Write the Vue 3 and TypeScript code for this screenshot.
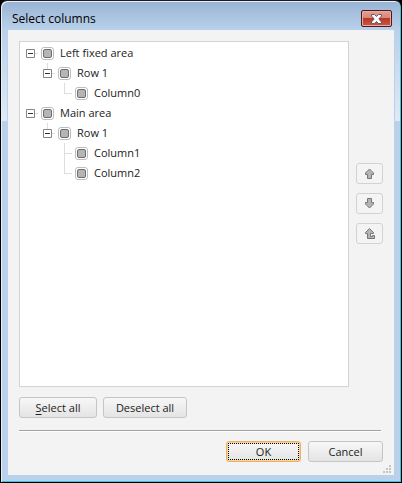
<script setup lang="ts">
import { computed, ref } from 'vue'

interface TreeNode {
  id: string
  label: string
  depth: number
  parents: string[]
  branch: boolean
  last: boolean
}

const nodes: TreeNode[] = [
  { id: 'left', label: 'Left fixed area', depth: 0, parents: [], branch: true, last: false },
  { id: 'left-row', label: 'Row 1', depth: 1, parents: ['left'], branch: true, last: true },
  { id: 'c0', label: 'Column0', depth: 2, parents: ['left', 'left-row'], branch: false, last: true },
  { id: 'main', label: 'Main area', depth: 0, parents: [], branch: true, last: true },
  { id: 'main-row', label: 'Row 1', depth: 1, parents: ['main'], branch: true, last: true },
  { id: 'c1', label: 'Column1', depth: 2, parents: ['main', 'main-row'], branch: false, last: false },
  { id: 'c2', label: 'Column2', depth: 2, parents: ['main', 'main-row'], branch: false, last: true },
]

const collapsed = ref<string[]>([])
const selected = ref<string[]>(nodes.map((n) => n.id))
const visible = computed(() => nodes.filter((n) => !n.parents.some((p) => collapsed.value.includes(p))))

function toggle(id: string) {
  collapsed.value = collapsed.value.includes(id)
    ? collapsed.value.filter((c) => c !== id)
    : [...collapsed.value, id]
}

const moves = [
  { name: 'Move up', path: 'M5.5 1 9.5 5V6.5H7.5V10.5H3.5V6.5H1.5V5Z' },
  { name: 'Move down', path: 'M5.5 10 9.5 6V4.5H7.5V.5H3.5V4.5H1.5V6Z' },
  { name: 'Move to parent', path: 'M5.5 .5 9.5 4.5V5.5H6.5V8.5H8.5V7.5H10.5V10.5H3.5V5.5H1.5V4.5Z' },
]
</script>

<template>
  <div class="window">
    <header class="titlebar">
      <h1>Select columns</h1>
      <button type="button" class="close" aria-label="Close">
        <svg width="11" height="10" viewBox="0 0 11 10">
          <path d="M.5.5H3.5L5.5 2.5 7.5.5H10.5V2L7.8 5 10.5 8V9.5H7.5L5.5 7.5 3.5 9.5H.5V8L3.2 5 .5 2Z" fill="#fff" stroke="#655a66" />
        </svg>
      </button>
    </header>
    <main class="content">
      <div class="columns">
        <ul class="tree">
          <li v-for="n in visible" :key="n.id" :class="['row', 'depth-' + n.depth]">
            <span :class="['gutter', { leaf: !n.branch, nested: n.depth > 0, more: !n.branch && !n.last }]">
              <button v-if="n.branch" type="button" class="expander" :aria-label="'Toggle ' + n.label" @click="toggle(n.id)">
                <svg width="9" height="9" viewBox="0 0 9 9">
                  <path d="M.5.5H8.5V8.5H.5Z" fill="#fff" stroke="#848484" />
                  <path d="M2 4.5H7" stroke="#333" />
                  <path v-if="collapsed.includes(n.id)" d="M4.5 2V7" stroke="#333" />
                </svg>
              </button>
            </span>
            <input :id="n.id" v-model="selected" type="checkbox" :value="n.id" />
            <label :for="n.id">{{ n.label }}</label>
          </li>
        </ul>
        <div class="moves">
          <button v-for="m in moves" :key="m.name" type="button" class="move" :aria-label="m.name">
            <svg width="11" height="11" viewBox="0 0 11 11">
              <path :d="m.path" fill="#b4b4b4" stroke="#777" />
            </svg>
          </button>
        </div>
      </div>
      <div class="selection">
        <button type="button" class="btn select" @click="selected = nodes.map((n) => n.id)"><u>S</u>elect all</button>
        <button type="button" class="btn deselect" @click="selected = []">Deselect all</button>
      </div>
      <hr />
      <footer>
        <button type="button" class="btn ok"><span>OK</span></button>
        <button type="button" class="btn cancel">Cancel</button>
      </footer>
      <svg class="grip" width="8" height="8" viewBox="0 0 8 8">
        <path d="M6 0h2v2H6ZM3 3h2v2H3ZM6 3h2v2H6ZM0 6h2v2H0ZM3 6h2v2H3ZM6 6h2v2H6Z" fill="#c4c4c4" />
      </svg>
    </main>
  </div>
</template>

<style>
body {
  margin: 0;
  background: #000;
}
</style>

<style scoped>
*,
*::before {
  box-sizing: border-box;
}
.window {
  display: flex;
  flex-direction: column;
  min-height: 100vh;
  padding: 0 7px 7px;
  border: 1px solid;
  border-color: #1b1b1b #000 #000;
  border-radius: 7px 7px 0 0;
  background:
    linear-gradient(transparent 30px, #dfeaf6) 0 0 / 6px 120px no-repeat,
    linear-gradient(transparent 30px, #dfeaf6) 100% 0 / 6px 120px no-repeat,
    linear-gradient(#98b3d3, #b9d1ea 29px);
  box-shadow: inset 1px 1px #e8f1fa, inset -1px -1px #35c5e0;
  font-family: "Open Sans", "Noto Sans", sans-serif;
  font-size: 11px;
  color: #222;
}
.titlebar {
  display: flex;
  justify-content: space-between;
  align-items: flex-start;
  height: 29px;
  padding: 9px 2px 0 4px;
}
h1 {
  margin: 0;
  font-size: 12px;
  line-height: 18px;
  font-weight: 400;
  color: #000;
}
button {
  display: flex;
  align-items: center;
  justify-content: center;
  padding: 0;
  font: inherit;
  color: inherit;
}
.close {
  width: 31px;
  height: 17px;
  border: 1px solid #501722;
  border-radius: 2px;
  background: linear-gradient(#e5a194, #d98577 45%, #b93725 50%, #ca5a43);
  box-shadow: inset 0 0 0 1px #e8aba0;
}
.content {
  position: relative;
  display: flex;
  flex: 1;
  flex-direction: column;
  padding: 11px 13px 13px 11px;
  background: #f3f3f3;
}
.columns {
  display: flex;
  flex: 1;
  gap: 7px;
}
.tree {
  flex: 1;
  margin: 0;
  padding: 1px 4px;
  border: 1px solid #d2d4d6;
  background: #fff;
  list-style: none;
}
.row {
  display: flex;
  align-items: center;
  height: 20px;
}
.depth-1 {
  padding-left: 17px;
}
.depth-2 {
  padding-left: 34px;
}
.gutter {
  display: flex;
  align-items: center;
  width: 17px;
  height: 20px;
  padding: 1px 0 0 2px;
  background: linear-gradient(#dedede, #dedede) 11px 10px / 3px 1px no-repeat;
}
.gutter.nested {
  background:
    linear-gradient(#dedede, #dedede) 11px 10px / 3px 1px no-repeat,
    linear-gradient(#dedede, #dedede) 6px 0 / 1px 6px no-repeat;
}
.gutter.leaf {
  background:
    linear-gradient(#dedede, #dedede) 6px 10px / 8px 1px no-repeat,
    linear-gradient(#dedede, #dedede) 6px 0 / 1px 11px no-repeat;
}
.gutter.leaf.more {
  background:
    linear-gradient(#dedede, #dedede) 6px 10px / 8px 1px no-repeat,
    linear-gradient(#dedede, #dedede) 6px 0 / 1px 20px no-repeat;
}
.expander {
  width: 9px;
  height: 9px;
  border: 0;
  background: none;
}
input {
  appearance: none;
  width: 13px;
  height: 13px;
  margin: 0;
  padding: 1px;
  border: 1px solid #bdbdbd;
  border-radius: 3px;
  background: #fff;
}
input:checked::before {
  content: "";
  display: block;
  width: 9px;
  height: 9px;
  border: 1px solid #6d6d6d;
  border-radius: 2px;
  background: #b5b5b5;
}
label {
  padding-left: 6px;
  line-height: 20px;
}
.moves {
  display: flex;
  flex-direction: column;
  justify-content: center;
  gap: 9px;
  width: 27px;
  margin-right: -2px;
  padding-bottom: 21px;
}
.move {
  height: 21px;
  border: 1px solid #d0d3d6;
  border-radius: 3px;
  background: #f4f4f4;
}
.selection {
  display: flex;
  gap: 6px;
  padding-top: 10px;
}
.btn {
  height: 21px;
  border: 1px solid #c3c5c8;
  border-radius: 3px;
  background: linear-gradient(#f7f7f7, #e4e4e4);
  white-space: pre;
}
.select {
  width: 78px;
}
.deselect {
  width: 84px;
}
u {
  text-underline-offset: 2px;
}
hr {
  width: 100%;
  height: 2px;
  margin: 12px 0 9px;
  border: 0;
  border-top: 1px solid #a0a0a0;
  border-bottom: 1px solid #fff;
}
footer {
  display: flex;
  justify-content: flex-end;
  gap: 7px;
  margin-right: -2px;
}
.ok,
.cancel {
  width: 75px;
}
.ok {
  border-color: #e8b366;
  box-shadow: inset 0 0 0 1px #ffd08a;
}
.ok span {
  width: 71px;
  border: 1px dotted #000;
  line-height: 15px;
}
.grip {
  position: absolute;
  right: 3px;
  bottom: 2px;
}
</style>
